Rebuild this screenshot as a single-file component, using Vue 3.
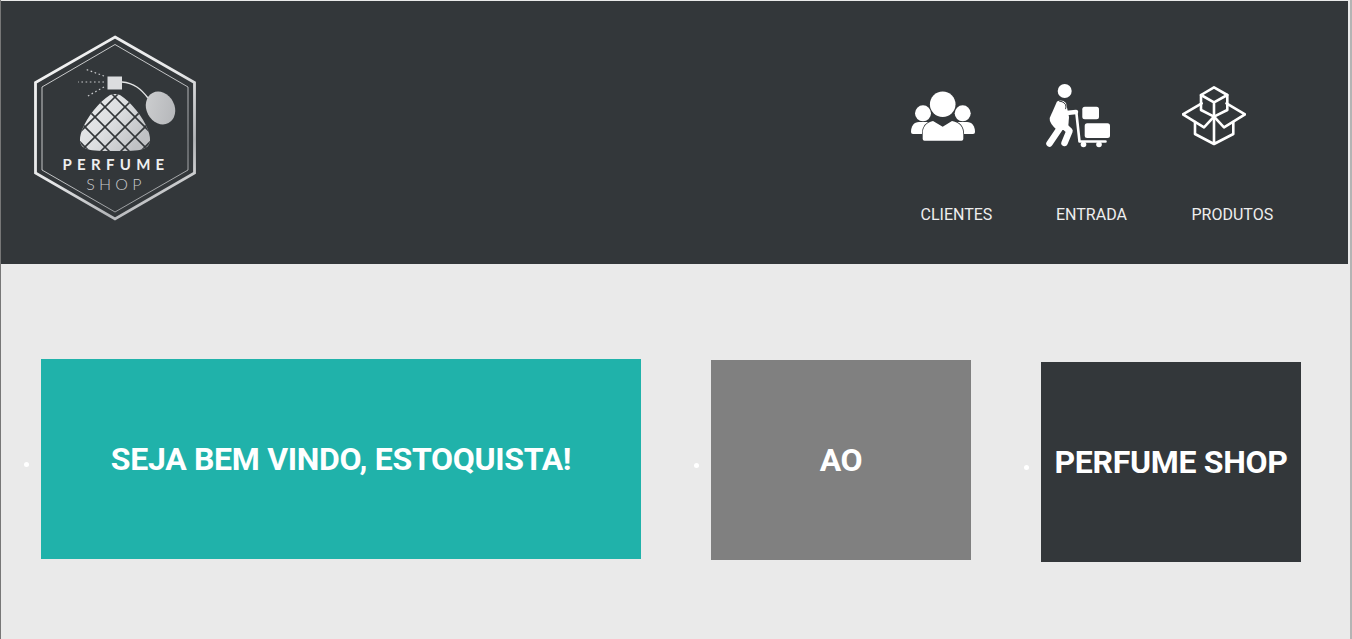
<template>
  <div class="page">
    <header class="topbar">
      <svg class="logo" viewBox="30 30 170 196" width="170" height="196">
        <defs>
          <linearGradient id="silver" x1="0" y1="0" x2="1" y2="0.6">
            <stop offset="0" stop-color="#ecedee" />
            <stop offset="0.55" stop-color="#dcdee0" />
            <stop offset="1" stop-color="#bfc1c4" />
          </linearGradient>
          <linearGradient id="bulb" x1="0" y1="0" x2="1" y2="1">
            <stop offset="0" stop-color="#cfd0d2" />
            <stop offset="1" stop-color="#b2b4b7" />
          </linearGradient>
          <linearGradient id="silverLine" gradientUnits="userSpaceOnUse" x1="35" y1="36" x2="195" y2="220">
            <stop offset="0" stop-color="#f4f4f4" />
            <stop offset="0.5" stop-color="#e6e7e8" />
            <stop offset="0.75" stop-color="#b4b6b9" />
            <stop offset="1" stop-color="#eeeeee" />
          </linearGradient>
          <clipPath id="bottleClip">
            <path :d="bottle" />
          </clipPath>
        </defs>
        <polygon points="115,37 194.5,82.5 194.5,173 115,219 35.5,173 35.5,82.5" fill="none" stroke="url(#silverLine)" stroke-width="2.8" />
        <polygon points="115,44.5 188,87 188,170 115,212 42,170 42,87" fill="none" stroke="url(#silverLine)" stroke-width="0.8" />

        <path :d="bottle" fill="url(#silver)" />
        <g clip-path="url(#bottleClip)" stroke="#33373a" stroke-width="1.6">
          <line v-for="k in lattice" :key="'a' + k" :x1="115 + k - 83" y1="14" :x2="115 + k + 77" y2="174" />
          <line v-for="k in lattice" :key="'b' + k" :x1="115 + k + 83" y1="14" :x2="115 + k - 77" y2="174" />
        </g>
        <rect x="107.5" y="76.5" width="14.5" height="13" fill="#dcdddf" />
        <path d="M122 82 C134 83 141 89 148 98" fill="none" stroke="#e4e5e6" stroke-width="1.4" />
        <ellipse cx="160.5" cy="108" rx="14" ry="17" transform="rotate(-28 160.5 108)" fill="url(#bulb)" />
        <g fill="none" stroke="#c9cacc" stroke-width="1.2" stroke-dasharray="1.6 2.6">
          <line x1="104" y1="82" x2="78" y2="82" />
          <line x1="104" y1="76" x2="85" y2="69" />
          <line x1="104" y1="87" x2="86" y2="97" />
        </g>

        <text x="116" y="170" text-anchor="middle" class="logo-name">PERFUME</text>
        <text x="116" y="190" text-anchor="middle" class="logo-shop">SHOP</text>
      </svg>

      <nav class="menu">
        <a v-for="item in menu" :key="item.label" class="menu-item">
          <svg class="menu-icon" viewBox="0 0 64 64" width="64" height="64">
            <g v-if="item.icon === 'people'" fill="#fff">
              <circle cx="31.7" cy="20.3" r="12.8" />
              <circle cx="12" cy="29.3" r="8" />
              <circle cx="51.7" cy="29.3" r="8" />
              <path d="M0 48 C0 42 3 38 8 38 H20 V50 H2 Q0 50 0 48 Z" />
              <path d="M64 48 C64 42 61 38 56 38 H44 V50 H62 Q64 50 64 48 Z" />
              <path d="M11.7 55 V50 C11.7 43 15 38.5 22 37 L31.7 42.7 L41 37 C49 38.5 52.3 43 52.3 50 V55 Q52.3 56.8 50.5 56.8 H13.5 Q11.7 56.8 11.7 55 Z" stroke="#33373a" stroke-width="1.6" paint-order="stroke" />
            </g>
            <g v-else-if="item.icon === 'worker'">
              <circle cx="18.7" cy="7" r="7" fill="#fff" />
              <path d="M11 17.5 Q16 15 20 19 L23 33 L22 46 H11 Q3 39 3.7 34 Z" fill="#fff" />
              <path d="M13 17 Q20 18 20 23 L19 27" fill="none" stroke="#33373a" stroke-width="1" />
              <path d="M16 25 L20.5 29 L30 28" fill="none" stroke="#fff" stroke-width="4.5" stroke-linecap="round" stroke-linejoin="round" />
              <path d="M14 44 L3.5 59.5" fill="none" stroke="#fff" stroke-width="6.5" stroke-linecap="round" />
              <path d="M18 42 L23.5 47 L18.5 59" fill="none" stroke="#fff" stroke-width="6.5" stroke-linecap="round" stroke-linejoin="round" />
              <path d="M30.3 28 L33.5 57.5 H59.5" fill="none" stroke="#fff" stroke-width="2.6" stroke-linecap="round" stroke-linejoin="round" />
              <rect x="36.3" y="22.7" width="16.7" height="12.6" rx="2.5" fill="#fff" />
              <rect x="38.7" y="39.3" width="25.3" height="14.7" rx="2.5" fill="#fff" />
              <circle cx="37.5" cy="60.5" r="2.8" fill="#fff" />
              <circle cx="53" cy="60.5" r="2.8" fill="#fff" />
            </g>
            <g v-else fill="none" stroke="#fff" stroke-width="2.6" stroke-linejoin="round" stroke-linecap="round">
              <path d="M32 3.3 L45.3 11 V26 L32 32.7 L19 26 V11 Z" />
              <path d="M19 11 L32 18.3 L45.3 11 M32 18.3 V32.7" />
              <path d="M19.7 19.3 L0.9 30.3 L22 43.3 L32 32.7 L42 43.3 L63 30.3 L44.5 19.3" />
              <path d="M13 38 V50 L32 60 L51.3 50 V38 M32 32.7 V60" />
            </g>
          </svg>
          <span class="menu-label">{{ item.label }}</span>
        </a>
      </nav>
    </header>

    <main class="content">
      <div v-for="card in cards" :key="card.text" class="slide" :class="card.cls">
        <span class="dot"></span>
        <div class="card">{{ card.text }}</div>
      </div>
    </main>
  </div>
</template>

<script setup>
const bottle = 'M110 95 Q115 93 120 95 C131 102 143 117 148 130 C152 141 150 147 143 149 C137 151 128 151 115 151 C102 151 93 151 87 149 C80 147 78 141 82 130 C87 117 99 102 110 95 Z'

const lattice = [-100, -80, -60, -40, -20, 0, 20, 40, 60, 80, 100]

const menu = [
  { label: 'CLIENTES', icon: 'people' },
  { label: 'ENTRADA', icon: 'worker' },
  { label: 'PRODUTOS', icon: 'box' },
]

const cards = [
  { text: 'SEJA BEM VINDO, ESTOQUISTA!', cls: 'teal' },
  { text: 'AO', cls: 'grey' },
  { text: 'PERFUME SHOP', cls: 'dark' },
]
</script>

<style>
html,
body {
  margin: 0;
  overflow: hidden;
}
</style>

<style scoped>
.page {
  box-sizing: border-box;
  height: 639px;
  width: 1352px;
  padding-top: 1px;
  padding-right: 2px;
  border-left: 1px solid #777;
  border-right: 2px solid #b4b4b4;
  background: #eaeaea;
  font-family: Roboto, "Liberation Sans", sans-serif;
  overflow: hidden;
}

.topbar {
  height: 263px;
  background: #33373a;
  display: flex;
  justify-content: space-between;
  align-items: flex-start;
}

.logo {
  display: block;
  margin: 29px 0 0 29px;
}

.logo-name {
  font-family: Lato, sans-serif;
  font-size: 15px;
  font-weight: 700;
  letter-spacing: 5.3px;
  fill: #eeeff0;
}

.logo-shop {
  font-family: Lato, sans-serif;
  font-size: 16px;
  font-weight: 300;
  letter-spacing: 4.2px;
  fill: #c9cacc;
}

.menu {
  display: flex;
  padding-top: 83px;
  margin-right: 31px;
}

.menu-item {
  display: flex;
  flex-direction: column;
  width: 135.5px;
  color: #eee;
}

.menu-icon {
  display: block;
}

.menu-label {
  margin: 57px 0 0 10px;
  font-size: 16px;
  line-height: 19px;
}

.content {
  display: flex;
  align-items: flex-start;
  padding: 95px 0 0 23px;
}

.slide {
  display: flex;
  align-items: center;
  gap: 12px;
  margin-right: 53px;
}

.slide.grey {
  margin-top: 1px;
}

.slide.dark {
  margin-top: 3px;
}

.dot {
  width: 5px;
  height: 5px;
  border-radius: 50%;
  background: #fff;
  margin-top: 11px;
}

.card {
  height: 200px;
  width: 260px;
  display: flex;
  align-items: center;
  justify-content: center;
  color: #fff;
  font-size: 32px;
  font-weight: 700;
  letter-spacing: -0.3px;
  white-space: nowrap;
}

.teal .card {
  width: 600px;
  background: #20b2aa;
}

.grey .card {
  background: #808080;
}

.dark .card {
  background: #33373a;
}
</style>
